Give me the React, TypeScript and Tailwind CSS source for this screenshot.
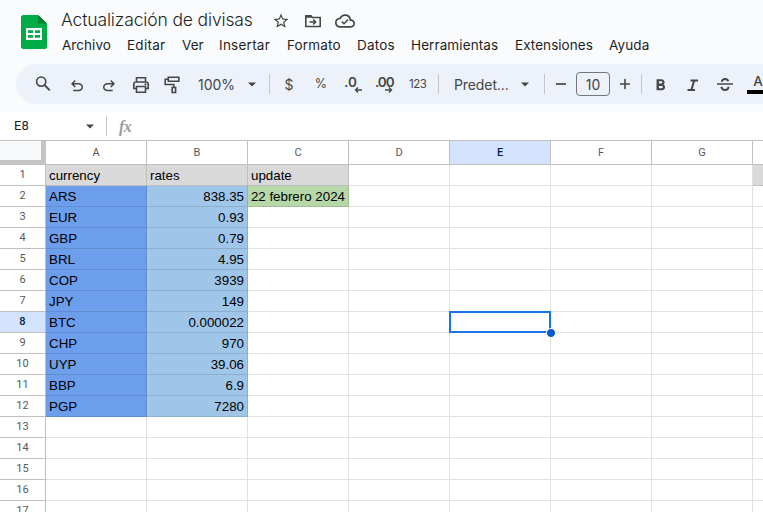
import React from "react";
import { MdCloudQueue, MdFormatBold, MdStarBorder } from "react-icons/md";

type Box = { className?: string; children: React.ReactNode };

function Icon({ className = "", children }: Box) {
  return <span className={`flex h-5 w-5 shrink-0 items-center justify-center ${className}`}>{children}</span>;
}

function Stroke({ className = "", children }: Box) {
  return (
    <svg viewBox="0 0 20 20" className={`h-5 w-5 ${className}`} fill="none" stroke="currentColor" strokeWidth="1.6">
      {children}
    </svg>
  );
}

function Symbol({ d, className = "" }: { d: string; className?: string }) {
  return (
    <svg viewBox="0 -960 960 960" className={`h-[18px] w-[18px] shrink-0 ${className}`} fill="currentColor">
      <path d={d} />
    </svg>
  );
}

function Divider({ className = "" }: { className?: string }) {
  return <span className={`h-5 w-px shrink-0 bg-[#c7c7c7] ${className}`} />;
}

function Caret({ className = "" }: { className?: string }) {
  return (
    <svg viewBox="0 0 10 5" className={`h-[5px] w-2.5 shrink-0 ${className}`} fill="#444746">
      <path d="M1 0.5h8L5 4.5z" />
    </svg>
  );
}

const UNDO =
  "M280-200v-80h284q63 0 109.5-40T720-420q0-60-46.5-100T564-560H312l104 104-56 56-200-200 200-200 56 56-104 104h252q97 0 166.5 63T800-420q0 94-69.5 157T564-200H280Z";

const menu: [string, string][] = [
  ["Archivo", "w-[65px] tracking-[0.05px]"],
  ["Editar", "w-[55px] tracking-[0.25px]"],
  ["Ver", "w-[37px]"],
  ["Insertar", "w-[68px] tracking-[0.25px]"],
  ["Formato", "w-[70px] tracking-[0.15px]"],
  ["Datos", "w-[54px] tracking-[0.2px]"],
  ["Herramientas", "w-[104px] tracking-[0.1px]"],
  ["Extensiones", "w-[94px] tracking-[0.05px]"],
  ["Ayuda", "w-[60px] tracking-[0.1px]"],
];

function Header() {
  return (
    <header className="flex h-16 shrink-0 pl-[21px]">
      <svg viewBox="0 0 26 34" className="mt-[15px] h-[34px] w-[26px] shrink-0">
        <path d="M2.5 0H17l9 8.5v23a2.5 2.5 0 0 1-2.5 2.5h-21A2.5 2.5 0 0 1 0 31.5v-29A2.5 2.5 0 0 1 2.5 0z" fill="#00ac47" />
        <path d="M17 0l9 8.500h-9z" fill="#00832d" />
        <path d="M5 13h16v12H5zM7 15.200v2.800h5v-2.800zM14 15.200v2.800h5v-2.800zM7 20v2.800h5V20zM14 20v2.800h5V20z" fill="#fff" fillRule="evenodd" />
      </svg>
      <div className="ml-[14px] flex flex-col">
        <div className="flex h-9 items-center pt-1 font-[Inter,sans-serif] text-[17.5px] text-[#1f1f1f]">
          <span className="w-[211px] font-light tracking-[-0.14px] whitespace-nowrap">Actualización de divisas</span>
          <MdStarBorder className="mt-0.5 h-[18px] w-[18px] text-[#444746]" />
          <Stroke className="mt-0.5 ml-[13px] text-[#444746]">
            <path d="M2.800 4.800h5l1.600 1.700h7.800v9H2.800z" strokeLinejoin="round" />
            <path d="M2.500 5.500h6" strokeWidth="2.500" />
            <path d="M6.500 11h6M10.200 8.500l2.500 2.500-2.500 2.500" strokeWidth="1.500" />
          </Stroke>
          <span className="relative mt-0.5 ml-3 h-5 w-5 text-[#444746]">
            <MdCloudQueue className="h-5 w-5" />
            <svg viewBox="0 0 20 20" className="absolute inset-0 h-5 w-5" fill="none" stroke="currentColor" strokeWidth="1.500">
              <path d="M6.800 10.600l2.200 2.200 4-4.200" />
            </svg>
          </span>
        </div>
        <nav className="flex h-[18px] items-center font-[Inter,sans-serif] text-[13.5px] text-[#1f1f1f]">
          {menu.map(([label, style]) => (
            <span key={label} className={`shrink-0 pl-px ${style}`}>{label}</span>
          ))}
        </nav>
      </div>
    </header>
  );
}

function Toolbar() {
  return (
    <div className="ml-4 flex h-10 shrink-0 items-center overflow-hidden rounded-l-full bg-[#edf2fa] pl-4 font-[Inter,sans-serif] text-[#444746]">
      <Icon className="ml-px">
        <Stroke>
          <circle cx="8.200" cy="7.600" r="4.600" />
          <path d="M11.500 11l5.300 5.300" strokeWidth="1.800" />
        </Stroke>
      </Icon>
      <Icon className="ml-[14px] pt-1"><Symbol d={UNDO} /></Icon>
      <Icon className="ml-3 pt-1"><Symbol d={UNDO} className="-scale-x-100" /></Icon>
      <Icon className="ml-3">
        <Stroke className="mt-0.5">
          <path d="M5.500 7V2.800h9V7M5.500 13.500H2.800V9.200Q2.800 7 5 7h10q2.200 0 2.200 2.200v4.300h-2.700M5.500 11.500h9v5.700h-9z" />
          <path d="M13.500 9.400h2" />
        </Stroke>
      </Icon>
      <Icon className="ml-[11px]">
        <Stroke className="mt-0.5">
          <path d="M6.300 2.300h10.500v4H6.300zM6.300 4.300H3.200v5.200h8.600v3M10.200 12.500h3.400v5h-3.400z" />
        </Stroke>
      </Icon>
      <span className="ml-4 w-11 shrink-0 pt-px text-[14px]">100%</span>
      <Caret className="ml-[5px]" />
      <Divider className="ml-3" />
      <span className="ml-[9px] w-5 shrink-0 text-center text-[14px]">$</span>
      <span className="ml-3 w-5 shrink-0 text-center text-[12.5px]">%</span>
      <span className="relative ml-[13px] h-5 w-[18px] shrink-0 text-[13.5px] leading-4 font-semibold">
        .0
        <svg viewBox="0 0 8 6" className="absolute top-[13px] left-[10px] h-1.5 w-2" fill="none" stroke="currentColor" strokeWidth="1.400">
          <path d="M8 3H1.500M4 0.500L1.500 3 4 5.500" />
        </svg>
      </span>
      <span className="relative ml-[14px] h-5 w-[18px] shrink-0 text-[13.5px] leading-4 font-semibold">
        <span className="-ml-px tracking-[-1.1px]">.00</span>
        <svg viewBox="0 0 8 6" className="absolute top-[13px] left-[9px] h-1.5 w-2" fill="none" stroke="currentColor" strokeWidth="1.400">
          <path d="M0 3h6.500M4 0.500L6.500 3 4 5.500" />
        </svg>
      </span>
      <span className="ml-[15px] w-5 shrink-0 pt-px text-[11.5px] tracking-[-0.5px]">123</span>
      <Divider className="ml-[9px]" />
      <span className="ml-[15px] w-[60px] shrink-0 text-[14px] tracking-[-0.1px]">Predet...</span>
      <Caret className="ml-[6px]" />
      <Divider className="ml-[14px]" />
      <Icon className="ml-[6px]"><span className="h-0.5 w-2.5 bg-[#5f6261]" /></Icon>
      <span className="ml-[5px] flex h-6 w-[34px] shrink-0 items-center justify-center rounded border border-[#747775] text-[14px]">10</span>
      <Icon className="ml-[5px]">
        <Stroke><path d="M5 10h10M10 5v10" /></Stroke>
      </Icon>
      <Divider className="ml-[6px]" />
      <Icon className="ml-2 pt-0.5"><MdFormatBold className="h-[19px] w-[19px]" /></Icon>
      <Icon className="ml-3 pt-px">
        <Stroke><path d="M8.500 5.500h7.500M5.500 15H13M12.200 5.500L9.400 15" strokeWidth="2" /></Stroke>
      </Icon>
      <Icon className="ml-[13px]">
        <Stroke>
          <path d="M2 10h16" />
          <path d="M6.700 7.800Q7.300 5 10 5t3.300 2.300M6.300 12.700Q7 16 10 16t3.700-3.300" strokeWidth="1.900" />
        </Stroke>
      </Icon>
      <span className="ml-3 flex h-5 w-5 shrink-0 flex-col items-center justify-between">
        <span className="pl-0.5 text-[13.5px] leading-[15px] font-medium">A</span>
        <span className="h-1 w-5 bg-black" />
      </span>
    </div>
  );
}

function FormulaBar() {
  return (
    <div className="mt-2 flex h-7 shrink-0 items-center bg-white pl-[14px]">
      <span className="w-[71px] font-[Roboto,sans-serif] text-[13px] text-[#1f1f1f]">E8</span>
      <Caret />
      <Divider className="ml-[11px]" />
      <span className="ml-[12px] pt-0.5 font-['Liberation_Serif',serif] text-[16px] font-bold tracking-[-0.5px] text-[#999da1] italic">fx</span>
    </div>
  );
}

const columns = ["A", "B", "C", "D", "E", "F", "G"];

const rows: string[][] = [
  ["currency", "rates", "update"],
  ["ARS", "838.35", "22 febrero 2024"],
  ["EUR", "0.93"],
  ["GBP", "0.79"],
  ["BRL", "4.95"],
  ["COP", "3939"],
  ["JPY", "149"],
  ["BTC", "0.000022"],
  ["CHP", "970"],
  ["UYP", "39.06"],
  ["BBP", "6.9"],
  ["PGP", "7280"],
  [], [], [], [], [],
];

function cellColor(r: number, c: number) {
  if (r === 0 && c < 3) return "bg-[#d9d9d9] border-[#bfbfbf]";
  if (r > 0 && r < 12 && c === 0) return "bg-[#6d9eeb] border-[#618ccf]";
  if (r > 0 && r < 12 && c === 1) return "bg-[#9fc5e8] border-[#8daecd]";
  if (r === 1 && c === 2) return "bg-[#b6d7a8] border-[#a0bd94]";
  return "bg-white border-[#e1e1e1]";
}

function Sheet() {
  return (
    <main className="min-h-0 flex-1 overflow-hidden border-t border-[#c0c0c0] bg-white">
      <div className="flex h-6 font-[Roboto,sans-serif] text-[11px] text-[#575a5a]">
        <div className="w-[46px] shrink-0 bg-[#c4c4c4] pr-[5px] pb-[5px]">
          <div className="h-[19px] bg-[#f8f9fa]" />
        </div>
        {columns.map((name) => (
          <div
            key={name}
            className={`flex w-[101px] shrink-0 items-center justify-center border-r border-b border-[#c0c0c0] pt-0.5 ${
              name === "E" ? "bg-[#d3e3fd] font-medium text-[#041e49]" : ""
            }`}
          >
            {name}
          </div>
        ))}
        <div className="flex-1 border-b border-[#c0c0c0]" />
      </div>
      {rows.map((row, r) => (
        <div key={r} className="flex h-[21px]">
          <div
            className={`flex w-[46px] shrink-0 items-start justify-center border-r border-b border-[#c0c0c0] pt-0.5 font-[Roboto,sans-serif] text-[11px] leading-4 ${
              r === 7 ? "bg-[#d3e3fd] font-medium text-[#041e49]" : "text-[#575a5a]"
            }`}
          >
            {r + 1}
          </div>
          {columns.map((name, c) => (
            <div
              key={name}
              className={`relative flex w-[101px] shrink-0 items-end border-r border-b px-[3px] pb-px font-['Liberation_Sans',Arial,sans-serif] text-[13.333px] leading-[17px] whitespace-nowrap text-black ${
                r > 0 && c > 0 ? "justify-end" : ""
              } ${cellColor(r, c)}`}
            >
              {row[c]}
              {r === 7 && name === "E" && (
                <>
                  <span className="absolute -top-px -left-px z-10 h-[22px] w-[102px] border-2 border-[#1a73e8]" />
                  <span className="absolute top-4 left-[96px] z-20 h-[10px] w-[10px] rounded-full border border-white bg-[#0b57d0]" />
                </>
              )}
            </div>
          ))}
          <div className={`flex-1 border-b ${r === 0 ? "border-[#bfbfbf] bg-[#d9d9d9]" : "border-[#e1e1e1]"}`} />
        </div>
      ))}
    </main>
  );
}

export default function App() {
  return (
    <div className="flex h-[512px] w-[763px] flex-col overflow-hidden bg-[#f9fbfd]">
      <Header />
      <Toolbar />
      <FormulaBar />
      <Sheet />
    </div>
  );
}
